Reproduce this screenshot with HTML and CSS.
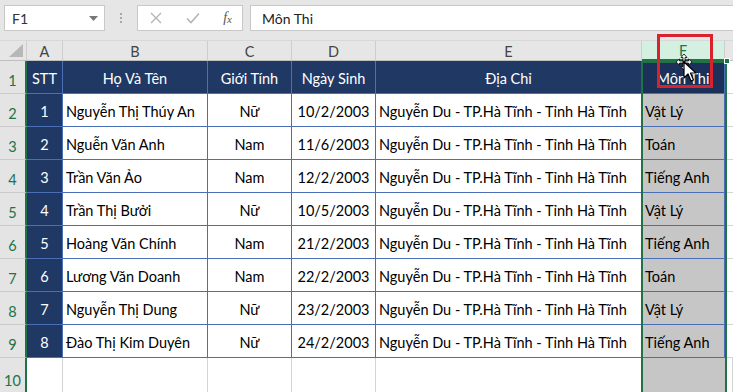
FILE: index.html
```html
<!DOCTYPE html>
<html>
<head>
<meta charset="utf-8">
<link rel="stylesheet" href="styles.css">
</head>
<body>
<div class="app">
  <div class="toolbar">
    <div class="namebox"><span>F1</span><svg class="dd" width="9" height="5" viewBox="0 0 9 5"><path d="M0 0H9L4.5 5Z" fill="#777"/></svg></div>
    <div class="dots"><i></i><i></i><i></i></div>
    <div class="btns">
      <svg class="ico" width="14" height="14" viewBox="0 0 14 14"><path d="M2 2L12 12M12 2L2 12" stroke="#b5b5b5" stroke-width="1.4"/></svg>
      <svg class="ico" width="16" height="14" viewBox="0 0 16 14"><path d="M2 7.5L6 11.5L14 2.5" stroke="#b5b5b5" stroke-width="1.6" fill="none"/></svg>
      <span class="fx">f<sub>x</sub></span>
    </div>
    <div class="formula">Môn Thi</div>
  </div>
  <div class="sheet">
    <div class="grid">
      <div class="ch corner"><svg width="14" height="13" viewBox="0 0 14 13"><path d="M14 0V13H0Z" fill="#b7b7b7"/></svg></div>
      <div class="ch">A</div><div class="ch">B</div><div class="ch">C</div><div class="ch">D</div><div class="ch">E</div><div class="ch chsel">F</div><div class="ch chg"></div>

      <div class="rh">1</div>
      <div class="c hd">STT</div><div class="c hd">Họ Và Tên</div><div class="c hd">Giới Tính</div><div class="c hd">Ngày Sinh</div><div class="c hd">Địa Chỉ</div><div class="c hd hdsel">Môn Thi</div><div class="c g"></div>

      <div class="rh">2</div>
      <div class="c stt">1</div><div class="c l">Nguyễn Thị Thúy An</div><div class="c m">Nữ</div><div class="c m">10/2/2003</div><div class="c l">Nguyễn Du - TP.Hà Tĩnh - Tỉnh Hà Tĩnh</div><div class="c l sel">Vật Lý</div><div class="c g"></div>

      <div class="rh">3</div>
      <div class="c stt">2</div><div class="c l">Nguễn Văn Anh</div><div class="c m">Nam</div><div class="c m">11/6/2003</div><div class="c l">Nguyễn Du - TP.Hà Tĩnh - Tỉnh Hà Tĩnh</div><div class="c l sel">Toán</div><div class="c g"></div>

      <div class="rh">4</div>
      <div class="c stt">3</div><div class="c l">Trần Văn Ảo</div><div class="c m">Nam</div><div class="c m">12/2/2003</div><div class="c l">Nguyễn Du - TP.Hà Tĩnh - Tỉnh Hà Tĩnh</div><div class="c l sel">Tiếng Anh</div><div class="c g"></div>

      <div class="rh">5</div>
      <div class="c stt">4</div><div class="c l">Trần Thị Bưởi</div><div class="c m">Nữ</div><div class="c m">10/5/2003</div><div class="c l">Nguyễn Du - TP.Hà Tĩnh - Tỉnh Hà Tĩnh</div><div class="c l sel">Vật Lý</div><div class="c g"></div>

      <div class="rh">6</div>
      <div class="c stt">5</div><div class="c l">Hoàng Văn Chính</div><div class="c m">Nam</div><div class="c m">21/2/2003</div><div class="c l">Nguyễn Du - TP.Hà Tĩnh - Tỉnh Hà Tĩnh</div><div class="c l sel">Tiếng Anh</div><div class="c g"></div>

      <div class="rh">7</div>
      <div class="c stt">6</div><div class="c l">Lương Văn Doanh</div><div class="c m">Nam</div><div class="c m">22/2/2003</div><div class="c l">Nguyễn Du - TP.Hà Tĩnh - Tỉnh Hà Tĩnh</div><div class="c l sel">Toán</div><div class="c g"></div>

      <div class="rh">8</div>
      <div class="c stt">7</div><div class="c l">Nguyễn Thị Dung</div><div class="c m">Nữ</div><div class="c m">23/2/2003</div><div class="c l">Nguyễn Du - TP.Hà Tĩnh - Tỉnh Hà Tĩnh</div><div class="c l sel">Vật Lý</div><div class="c g"></div>

      <div class="rh">9</div>
      <div class="c stt">8</div><div class="c l">Đào Thị Kim Duyên</div><div class="c m">Nữ</div><div class="c m">24/2/2003</div><div class="c l">Nguyễn Du - TP.Hà Tĩnh - Tỉnh Hà Tĩnh</div><div class="c l sel">Tiếng Anh</div><div class="c g"></div>

      <div class="rh">10</div>
      <div class="c e"></div><div class="c e"></div><div class="c e"></div><div class="c e"></div><div class="c e"></div><div class="c e sel"></div><div class="c e"></div>
    </div>
    <div class="selbox"><span class="handle"></span></div>
  </div>
  <div class="redbox"></div>
  <svg class="cursor" width="26" height="30" viewBox="0 0 26 30">
    <path d="M9 1L12 4.5H10V8H8V4.5H6Z M1 9L4.5 6V8H8V10H4.5V12Z M17 9L13.5 6V8H10V10H13.5V12Z M9 17L12 13.5H10V10H8V13.5H6Z" fill="#fff" stroke="#000" stroke-width="0.8"/>
    <path d="M9 9L9 25L13 21L16 28L18.5 27L15.5 20L21 20Z" fill="#fff" stroke="#000" stroke-width="1.2" stroke-linejoin="round"/>
  </svg>
</div>
</body>
</html>
```
FILE: styles.css
```css
* { box-sizing: border-box; }
html, body { margin: 0; padding: 0; }
body { width: 733px; height: 392px; overflow: hidden; background: #fff; font-family: "Lato", "Open Sans", sans-serif; }
.app { position: relative; width: 733px; height: 392px; overflow: hidden; }

.toolbar { height: 41px; background: #e6e6e6; display: flex; align-items: flex-start; padding: 5px 0 0 4px; border-bottom: 1px solid #d8d8d8; }
.namebox { width: 101px; height: 26px; background: #fff; border: 1px solid #c8c8c8; display: flex; align-items: center; justify-content: space-between; padding: 0 6px 0 7px; font-size: 14px; color: #333; }
.dd { margin-top: 1px; }
.dots { width: 32px; height: 26px; display: flex; flex-direction: column; align-items: center; justify-content: center; gap: 2px; }
.dots i { display: block; width: 2px; height: 2px; background: #a8a8a8; }
.btns { width: 106px; height: 26px; background: #fff; border: 1px solid #c8c8c8; display: flex; align-items: center; padding: 0 10px 0 11px; justify-content: space-between; }
.fx { font-family: "Liberation Serif", serif; font-style: italic; font-size: 14px; color: #555; line-height: 1; }
.fx sub { font-size: 11px; vertical-align: -1px; }
.formula { flex: 1; margin-left: 7px; height: 26px; background: #fff; border: 1px solid #c8c8c8; border-right: none; display: flex; align-items: center; padding-left: 11px; font-size: 14px; color: #222; }

.sheet { position: relative; height: 351px; overflow: hidden; }
.grid { display: grid; grid-template-columns: 27px 36px 145px 84px 84px 266px 83px 1fr; grid-template-rows: 20px repeat(9, 33px) 40px; }

.ch { background: #e6e6e6; border-right: 1px solid #cdcdcd; border-bottom: 1px solid #bfbfbf; display: flex; align-items: center; justify-content: center; font-size: 14.5px; color: #444; padding-top: 1px; }
.corner { justify-content: flex-end; align-items: flex-end; padding: 0 3px 3px 0; }
.chsel { background: #d3f0e0; color: #217346; border-bottom: 2px solid #217346; }
.chg { border-right: none; }

.rh { background: #e4e4e4; border-bottom: 1px solid #cbcbcb; border-right: 2px solid #217346; display: flex; align-items: center; justify-content: center; font-size: 14.5px; color: #217346; padding-top: 6px; }

.c { border-right: 1px solid #4a6fb6; border-bottom: 1px solid #4a6fb6; display: flex; align-items: center; font-size: 14.5px; color: #000; padding-top: 3px; white-space: nowrap; overflow: hidden; }
.hd { background: #1f3864; color: #fff; justify-content: center; }
.hdsel { background: #1b3159; }
.stt { background: #1f3864; color: #fff; justify-content: center; }
.l { padding-left: 3px; }
.m { justify-content: center; }
.sel { background: #c6c6c6; }
.g { border-right: none; border-bottom: 1px solid #d4d4d4; border-left: none; }
.e { border-right: 1px solid #d4d4d4; border-bottom: 1px solid #d4d4d4; }
.e.sel { border-right: 1px solid #c6c6c6; }

.selbox { position: absolute; left: 641px; top: 20px; width: 86px; height: 340px; border: 2px solid #217346; pointer-events: none; }
.handle { position: absolute; right: -5px; top: -5px; width: 6px; height: 6px; background: #217346; border: 1px solid #fff; }
.redbox { position: absolute; left: 657px; top: 34px; width: 56px; height: 54px; border: 3px solid #d8232e; }
.cursor { position: absolute; left: 675px; top: 53px; }
```
